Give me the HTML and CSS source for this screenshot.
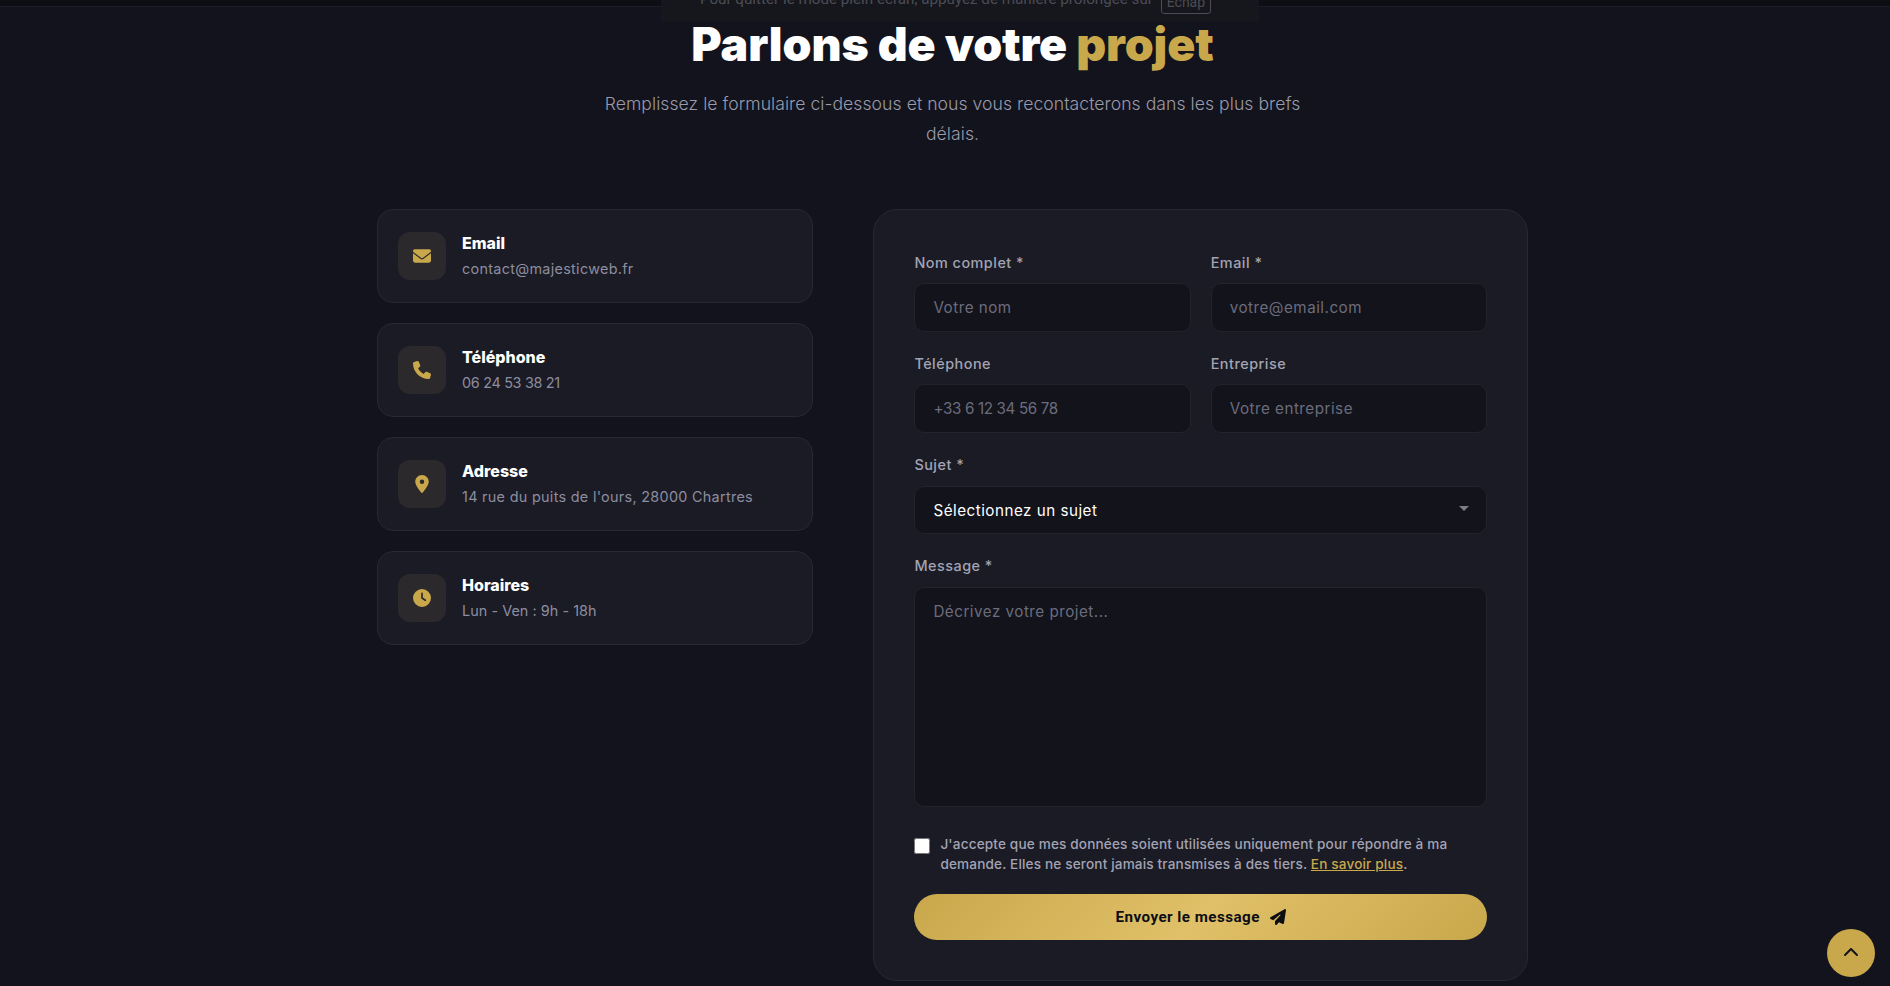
FILE: index.html
```html
<!DOCTYPE html>
<html lang="fr">
<head>
  <meta charset="UTF-8" />
  <meta name="viewport" content="width=device-width, initial-scale=1.0"/>
  <title>Contact - Majestic Web</title>
  <link rel="stylesheet" href="styles.css">
</head>
<body>

  <div class="top-strip"></div>
  <div class="fullscreen-hint">
    <p>Pour quitter le mode plein écran, appuyez de manière prolongée sur <kbd>Échap</kbd></p>
  </div>

  <main class="contact">
    <header class="section-head">
      <h1>Parlons de votre <span>projet</span></h1>
      <p>Remplissez le formulaire ci-dessous et nous vous recontacterons dans les plus brefs délais.</p>
    </header>

    <div class="contact-grid">
      <div class="info-list">
        <div class="info-card">
          <div class="info-icon">
            <svg viewBox="0 0 512 512"><path d="M48 64C21.5 64 0 85.5 0 112c0 15.1 7.1 29.3 19.2 38.4L236.8 313.6c11.4 8.5 27 8.5 38.4 0L492.8 150.4c12.1-9.1 19.2-23.3 19.2-38.4c0-26.5-21.5-48-48-48H48zM0 176V384c0 35.3 28.7 64 64 64H448c35.3 0 64-28.7 64-64V176L294.4 339.2c-22.8 17.1-54 17.1-76.8 0L0 176z"/></svg>
          </div>
          <div>
            <h3>Email</h3>
            <p>contact@majesticweb.fr</p>
          </div>
        </div>
        <div class="info-card">
          <div class="info-icon">
            <svg viewBox="0 0 512 512"><path d="M164.9 24.6c-7.7-18.6-28-28.5-47.4-23.2l-88 24C12.1 30.2 0 46 0 64C0 311.4 200.6 512 448 512c18 0 33.8-12.1 38.6-29.5l24-88c5.3-19.4-4.6-39.7-23.2-47.4l-96-40c-16.3-6.8-35.2-2.1-46.3 11.6L304.7 368C234.3 334.7 177.3 277.7 144 207.3L193.3 167c13.7-11.2 18.4-30 11.6-46.3l-40-96z"/></svg>
          </div>
          <div>
            <h3>Téléphone</h3>
            <p class="phone-value">06 24 53 38 21</p>
          </div>
        </div>
        <div class="info-card">
          <div class="info-icon">
            <svg viewBox="0 0 384 512"><path d="M215.7 499.2C267 435 384 279.4 384 192C384 86 298 0 192 0S0 86 0 192c0 87.4 117 243 168.3 307.2c12.3 15.3 35.1 15.3 47.4 0zM192 128a64 64 0 1 1 0 128 64 64 0 1 1 0-128z"/></svg>
          </div>
          <div>
            <h3>Adresse</h3>
            <p>14 rue du puits de l'ours, 28000 Chartres</p>
          </div>
        </div>
        <div class="info-card">
          <div class="info-icon">
            <svg viewBox="0 0 512 512"><path d="M256 0a256 256 0 1 1 0 512A256 256 0 1 1 256 0zM232 120V256c0 8 4 15.5 10.7 20l96 64c11 7.4 25.9 4.4 33.3-6.7s4.4-25.9-6.7-33.3L280 243.2V120c0-13.3-10.7-24-24-24s-24 10.7-24 24z"/></svg>
          </div>
          <div>
            <h3>Horaires</h3>
            <p class="hours-value">Lun - Ven : 9h - 18h</p>
          </div>
        </div>
      </div>

      <form class="contact-form">
        <div class="form-row">
          <div class="form-group">
            <label for="name">Nom complet *</label>
            <input type="text" id="name" placeholder="Votre nom">
          </div>
          <div class="form-group">
            <label for="email">Email *</label>
            <input type="email" id="email" placeholder="votre@email.com">
          </div>
        </div>
        <div class="form-row">
          <div class="form-group">
            <label for="phone">Téléphone</label>
            <input type="tel" id="phone" placeholder="+33 6 12 34 56 78">
          </div>
          <div class="form-group">
            <label for="company">Entreprise</label>
            <input type="text" id="company" placeholder="Votre entreprise">
          </div>
        </div>
        <div class="form-group">
          <label for="subject">Sujet *</label>
          <div class="select-wrap">
            <select id="subject">
              <option>Sélectionnez un sujet</option>
            </select>
          </div>
        </div>
        <div class="form-group">
          <label for="message">Message *</label>
          <textarea id="message" placeholder="Décrivez votre projet..."></textarea>
        </div>
        <div class="consent">
          <input type="checkbox" id="consent">
          <label for="consent">J'accepte que mes données soient utilisées uniquement pour répondre à ma demande. Elles ne seront jamais transmises à des tiers. <a href="#">En savoir plus</a>.</label>
        </div>
        <button type="submit" class="submit-btn">
          Envoyer le message
          <svg viewBox="0 0 512 512"><path d="M498.1 5.6c10.1 7 15.4 19.1 13.5 31.2l-64 416c-1.5 9.7-7.4 18.2-16 23s-18.9 5.4-28 1.6L284 427.7l-68.5 74.1c-8.9 9.7-22.9 12.9-35.2 8.1S160 493.2 160 480V396.4c0-4 1.5-7.8 4.2-10.7L331.8 202.8c5.8-6.3 5.6-16-.4-22s-15.7-6.4-22-.7L106 360.8 17.7 316.6C7.1 311.3 .3 300.7 0 288.9s5.9-22.8 16.1-28.7l448-256c10.7-6.1 23.9-5.5 34 1.4z"/></svg>
        </button>
      </form>
    </div>
  </main>

  <a href="#" class="scroll-top" aria-label="Haut de page">
    <svg viewBox="0 0 512 512"><path d="M233.4 105.4c12.5-12.5 32.8-12.5 45.3 0l192 192c12.5 12.5 12.5 32.8 0 45.3s-32.8 12.5-45.3 0L256 173.3 86.6 342.6c-12.5 12.5-32.8 12.5-45.3 0s-12.5-32.8 0-45.3l192-192z"/></svg>
  </a>

</body>
</html>
```

FILE: styles.css
```css
:root {
  --gold: #c9a84c;
  --gold-light: #e0c068;
  --bg-color: #12131c;
  --card-color: #1a1b25;
  --input-color: #12131b;
  --border-color: #272832;
  --muted: #8d8d9f;
  --label: #a3a3b3;
}

* {
  box-sizing: border-box;
  margin: 0;
  padding: 0;
}

html {
  overflow: hidden;
}

body {
  font-family: 'Inter', sans-serif;
  background-color: var(--bg-color);
  color: white;
  line-height: 1.7;
  height: 986px;
  overflow: hidden;
}

/* browser fullscreen notice, cut off by the top of the window */
.top-strip {
  height: 7px;
  background: #0d0e14;
  border-bottom: 1px solid #1c1d25;
}

.fullscreen-hint {
  position: absolute;
  top: 0;
  left: 661px;
  width: 598px;
  height: 22px;
  padding-right: 9px;
  overflow: hidden;
  background: #16171d;
  color: #4b4c54;
  font-family: 'Roboto', sans-serif;
  font-size: 15.2px;
  line-height: 20px;
  text-align: center;
}

.fullscreen-hint p {
  margin-top: -11px;
  white-space: nowrap;
}

.fullscreen-hint kbd {
  display: inline-block;
  margin-left: 4px;
  padding: 0 5px;
  border: 1px solid #4b4c54;
  border-radius: 3px;
  font-family: inherit;
  font-size: 14px;
  height: 25px;
  line-height: 24px;
  vertical-align: top;
}

.contact {
  width: 1151px;
  margin-left: 377px;
}

.section-head {
  text-align: center;
  padding-top: 11px;
  margin-bottom: 60px;
}

.section-head h1 {
  font-size: 46.4px;
  font-weight: 900;
  line-height: 1.16;
  letter-spacing: -0.1px;
  margin-bottom: 17px;
}

.section-head h1 span {
  color: var(--gold);
}

.section-head p {
  max-width: 710px;
  margin: 0 auto;
  font-size: 17.6px;
  font-weight: 300;
  letter-spacing: 0.05px;
  color: #9a9aaa;
}

.contact-grid {
  display: grid;
  grid-template-columns: 1fr 1.5fr;
  gap: 60px;
  align-items: start;
}

.info-list {
  display: flex;
  flex-direction: column;
  gap: 20px;
}

.info-card {
  display: flex;
  align-items: center;
  gap: 16px;
  padding: 20px;
  background: var(--card-color);
  border: 1px solid var(--border-color);
  border-radius: 16px;
}

.info-icon {
  width: 48px;
  height: 48px;
  flex-shrink: 0;
  display: flex;
  align-items: center;
  justify-content: center;
  background: #2b292b;
  border-radius: 12px;
}

.info-icon svg {
  width: 18px;
  height: 18px;
  fill: var(--gold);
}

.info-card h3 {
  font-size: 16px;
  font-weight: 800;
  margin-bottom: 0.4px;
}

.info-card p {
  font-size: 14.4px;
  letter-spacing: 0.3px;
  color: var(--muted);
}

.info-card .phone-value {
  letter-spacing: -0.3px;
}

.info-card .hours-value {
  letter-spacing: 0.05px;
}

.contact-form {
  padding: 41px 40px 40px;
  background: var(--card-color);
  border: 1px solid var(--border-color);
  border-radius: 24px;
}

.form-row {
  display: grid;
  grid-template-columns: 1fr 1fr;
  gap: 20px;
}

.form-group {
  margin-bottom: 20px;
}

.form-group label {
  display: block;
  margin-bottom: 8px;
  font-size: 14.4px;
  font-weight: 500;
  letter-spacing: 0.5px;
  color: var(--label);
}

.form-group input,
.form-group select,
.form-group textarea {
  display: block;
  width: 100%;
  height: 48.8px;
  padding: 0 18px;
  background: var(--input-color);
  border: 1px solid #22232c;
  border-radius: 10px;
  color: white;
  font-family: inherit;
  font-size: 15.2px;
  letter-spacing: 0.5px;
  outline: none;
}

.form-group input::placeholder,
.form-group textarea::placeholder {
  color: #6c6c7c;
  opacity: 1;
}

.form-group input[type="tel"]::placeholder {
  letter-spacing: -0.35px;
}

.form-group select {
  appearance: none;
}

.select-wrap {
  position: relative;
}

.select-wrap::after {
  content: "";
  position: absolute;
  right: 18px;
  top: 20px;
  border-left: 5px solid transparent;
  border-right: 5px solid transparent;
  border-top: 5px solid #7d7d87;
}

.form-group textarea {
  height: 220.5px;
  padding: 14px 18px;
  margin-bottom: 27px;
  resize: none;
}

.consent {
  display: flex;
  gap: 10px;
  margin-bottom: 20px;
}

.consent input {
  width: 16px;
  height: 16px;
  flex-shrink: 0;
  margin-top: 4px;
}

.consent label {
  font-size: 13.6px;
  font-weight: 500;
  line-height: 20px;
  letter-spacing: 0.15px;
  color: var(--label);
}

.consent a {
  color: var(--gold);
}

.submit-btn {
  width: 100%;
  height: 46px;
  display: flex;
  align-items: center;
  justify-content: center;
  gap: 10px;
  border: none;
  border-radius: 50px;
  background: linear-gradient(135deg, var(--gold), var(--gold-light), var(--gold));
  color: #0d0e14;
  font-family: 'Roboto', sans-serif;
  font-size: 15.2px;
  font-weight: 700;
  letter-spacing: 0.45px;
  cursor: pointer;
}

.submit-btn svg {
  width: 16px;
  height: 16px;
  fill: #0d0e14;
}

.scroll-top {
  position: fixed;
  right: 15px;
  bottom: 9px;
  width: 48px;
  height: 48px;
  display: flex;
  align-items: center;
  justify-content: center;
  background: var(--gold);
  border-radius: 50%;
}

.scroll-top svg {
  width: 16px;
  height: 16px;
  fill: #12131c;
}
```
